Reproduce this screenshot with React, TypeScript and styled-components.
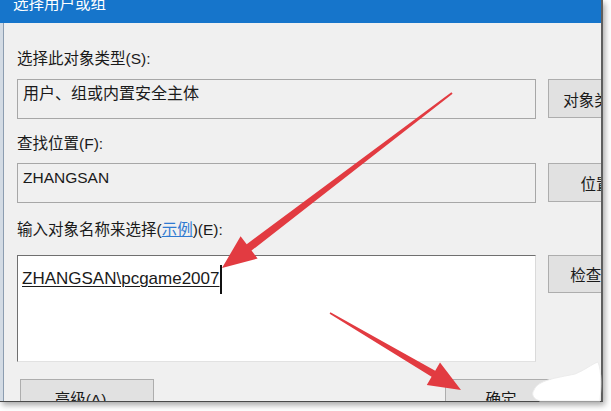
import styled, { createGlobalStyle } from "styled-components";

const GlobalStyle = createGlobalStyle`
  html, body {
    margin: 0;
    padding: 0;
    background: #ffffff;
  }
  body {
    font-family: "Liberation Sans", "Noto Sans CJK SC", sans-serif;
  }
`;

const Screen = styled.div`
  position: relative;
  width: 611px;
  height: 411px;
  overflow: hidden;
  background: #ffffff;
`;

const DialogWindow = styled.div`
  width: 603px;
  height: 402px;
  box-sizing: border-box;
  display: flex;
  flex-direction: column;
  overflow: hidden;
  background: #f0f0f0;
  border-right: 2px solid #5e5e5e;
  border-bottom: 1px solid #4a4a4a;
  box-shadow: 2px 3px 6px rgba(0, 0, 0, 0.35);
`;

const TitleBar = styled.div`
  height: 23px;
  flex: none;
  background: #1675cb;
  color: #ffffff;
  font-size: 15.5px;
  line-height: 15px;
  padding-left: 13px;
  overflow: hidden;
`;

const TitleText = styled.div`
  margin-top: -4px;
`;

const Body = styled.div`
  flex: 1;
  display: flex;
  flex-direction: column;
  border-left: 3px solid #d3dbe4;
  box-shadow: inset 1px 0 0 #8c9db0;
  padding: 26px 0 0 14px;
  font-size: 15.5px;
  color: #1a1a1a;
`;

const Label = styled.div<{ $top: number; $gap: number }>`
  height: 20px;
  line-height: 20px;
  margin-top: ${(p) => p.$top}px;
  margin-bottom: ${(p) => p.$gap}px;
  white-space: nowrap;
`;

const Link = styled.span`
  color: #2f7ad1;
  text-decoration: underline;
`;

const Row = styled.div<{ $height: number }>`
  display: grid;
  grid-template-columns: 519px 128px;
  column-gap: 12px;
  align-items: start;
  height: ${(p) => p.$height}px;
`;

const ReadBox = styled.div<{ $size?: number }>`
  box-sizing: border-box;
  height: 40px;
  border: 1px solid #a7a7a7;
  background: #f0f0f0;
  padding: 4px 5px;
  font-size: ${(p) => p.$size ?? 15.5}px;
  line-height: 20px;
  white-space: nowrap;
`;

const InputArea = styled.div`
  box-sizing: border-box;
  height: 107px;
  background: #ffffff;
  border-style: solid;
  border-width: 1px;
  border-color: #6f6f6f #dadada #e2e2e2 #6f6f6f;
  padding: 9px 4px;
  font-size: 17px;
  line-height: 28px;
  white-space: nowrap;
  display: flex;
  align-items: flex-start;
`;

const Typed = styled.span`
  text-decoration: underline;
  text-decoration-thickness: 1px;
  text-underline-offset: 2px;
`;

const Caret = styled.span`
  display: inline-block;
  width: 1.5px;
  height: 29px;
  background: #111111;
  margin-left: 1px;
`;

const Button = styled.div<{ $height?: number; $width?: number }>`
  box-sizing: border-box;
  width: ${(p) => p.$width ?? 128}px;
  height: ${(p) => p.$height ?? 39}px;
  flex: none;
  background: #e1e1e1;
  border: 1px solid #adadad;
  display: flex;
  align-items: center;
  justify-content: center;
  white-space: nowrap;
  color: #1a1a1a;
`;

const BottomRow = styled.div`
  display: flex;
  align-items: flex-start;
  margin-top: 17px;
  padding-left: 3px;
  gap: 10px;
`;

const Spacer = styled.div`
  width: 271px;
  flex: none;
`;

const Overlay = styled.svg`
  position: absolute;
  left: 0;
  top: 0;
  width: 611px;
  height: 411px;
  pointer-events: none;
`;

export default function App() {
  return (
    <Screen>
      <GlobalStyle />
      <DialogWindow>
        <TitleBar>
          <TitleText>选择用户或组</TitleText>
        </TitleBar>
        <Body>
          <Label $top={0} $gap={10}>选择此对象类型(S):</Label>
          <Row $height={40}>
            <ReadBox $size={16}>用户、组或内置安全主体</ReadBox>
            <Button>对象类型(O)...</Button>
          </Row>

          <Label $top={15} $gap={9}>查找位置(F):</Label>
          <Row $height={40}>
            <ReadBox>ZHANGSAN</ReadBox>
            <Button>位置(L)...</Button>
          </Row>

          <Label $top={17} $gap={15}>
            输入对象名称来选择(<Link>示例</Link>)(E):
          </Label>
          <Row $height={107}>
            <InputArea>
              <Typed>ZHANGSAN\pcgame2007</Typed>
              <Caret />
            </InputArea>
            <Button $height={38}>检查名称(C)</Button>
          </Row>

          <BottomRow>
            <Button $width={134} $height={38}>高级(A)...</Button>
            <Spacer />
            <Button $width={112} $height={38}>确定</Button>
            <Button $width={112} $height={38}>取消</Button>
          </BottomRow>
        </Body>
      </DialogWindow>

      <Overlay viewBox="0 0 611 411">
        <polygon
          points="451.4,92.2 246.7,244.2 240.6,236.3 222,268 257.6,258.5 251.5,250.6 452.6,93.8"
          fill="#e23b41"
        />
        <polygon
          points="330.4,312.3 435.2,370.8 440,362.6 461,390 426.8,385 431.6,376.8 329.6,313.7"
          fill="#e23b41"
        />
        <path
          d="M534 390 C538 380 556 378 575 374 C585 370 592 364 598 362 C602 372 601 388 600 401 L540 401 C533 399 531 394 534 390 Z"
          fill="#ffffff"
          stroke="#ececec"
          strokeWidth="1"
        />
      </Overlay>
    </Screen>
  );
}
